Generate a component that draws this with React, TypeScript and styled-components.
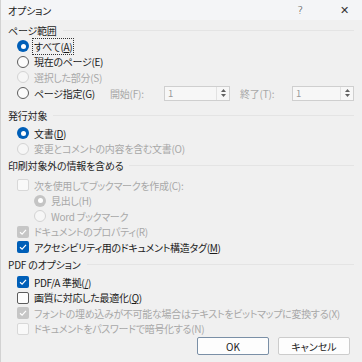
import React from 'react';
import styled, { createGlobalStyle, css } from 'styled-components';

const GlobalStyle = createGlobalStyle`
  html, body {
    margin: 0;
    padding: 0;
    background: #f0f0f0;
  }
  body {
    font-family: 'Noto Sans CJK JP', 'Noto Sans', sans-serif;
    font-feature-settings: 'palt';
    -webkit-font-smoothing: antialiased;
  }
`;

const Dialog = styled.div`
  width: 362px;
  height: 362px;
  box-sizing: border-box;
  border-left: 1px solid #d2d2d2;
  background: #f0f0f0;
  display: flex;
  flex-direction: column;
  overflow: hidden;
`;

const TitleBar = styled.div`
  height: 20px;
  display: flex;
  align-items: center;
  padding: 0 0 0 7px;
  background: #f4f5f7;
  color: #1a1a1a;
  font-size: 10px;
  letter-spacing: -0.2px;
`;

const Title = styled.div`
  flex: 1;
`;

const TitleButton = styled.div<{ $w: number }>`
  width: ${p => p.$w}px;
  text-align: center;
  font-size: 11px;
  color: #333;
  font-family: 'DejaVu Sans', sans-serif;
  font-weight: 300;
`;

const Body = styled.div`
  padding: 0 8px 0 7px;
  display: flex;
  flex-direction: column;
`;

const SectionHeader = styled.div<{ $mt?: number; $mb?: number }>`
  height: 17px;
  margin-top: ${p => p.$mt ?? 0}px;
  margin-bottom: ${p => p.$mb ?? 0}px;
  display: flex;
  align-items: center;
  font-size: 10px;
  letter-spacing: -0.2px;
  color: #1f1f1f;

  &::after {
    content: '';
    flex: 1;
    margin-left: 6px;
    border-top: 1px solid #e4e4e4;
  }
`;

const Row = styled.div<{ $indent?: number }>`
  height: 15.5px;
  display: flex;
  align-items: center;
  padding-left: ${p => 9 + (p.$indent ?? 0)}px;
`;

const RangeRow = styled.div`
  height: 16px;
  display: grid;
  grid-template-columns: 93px 54px 66px 62px 62px;
  align-items: center;
  padding-left: 9px;
`;

const Cell = styled.div`
  display: flex;
  align-items: center;
`;

const Label = styled.span<{ $disabled?: boolean; $focus?: boolean }>`
  font-size: 10px;
  letter-spacing: -0.3px;
  white-space: nowrap;
  color: ${p => (p.$disabled ? '#a8a8a8' : '#1b1b1b')};
  margin-left: 5px;
  ${p =>
    p.$focus &&
    css`
      outline: 1px dotted #333;
      outline-offset: 0;
      padding: 0 1px;
      margin-left: 4px;
    `}
`;

const Key = styled.span`
  text-decoration: underline;
  text-underline-offset: 1px;
`;

const RadioMark = styled.span<{ $checked?: boolean; $disabled?: boolean }>`
  width: 12px;
  height: 12px;
  box-sizing: border-box;
  border-radius: 50%;
  flex: none;
  display: flex;
  align-items: center;
  justify-content: center;
  border: 1px solid ${p => (p.$disabled ? '#d3d3d3' : '#5c5c5c')};
  background: ${p => (p.$disabled ? '#f6f6f6' : '#fbfbfb')};
  ${p =>
    p.$checked &&
    css`
      border: none;
      background: ${p.$disabled ? '#c4c4c4' : '#005fb8'};
      &::after {
        content: '';
        width: 5px;
        height: 5px;
        border-radius: 50%;
        background: #fff;
      }
    `}
`;

const BoxMark = styled.span<{ $checked?: boolean; $disabled?: boolean }>`
  width: 12px;
  height: 12px;
  box-sizing: border-box;
  border-radius: 2px;
  flex: none;
  display: flex;
  align-items: center;
  justify-content: center;
  border: 1px solid ${p => (p.$disabled ? '#d8d8d8' : '#5c5c5c')};
  background: ${p => (p.$disabled ? '#f9f9f9' : '#fdfdfd')};
  ${p =>
    p.$checked &&
    css`
      border: none;
      background: ${p.$disabled ? '#c6c6c6' : '#005fb8'};
    `}
`;

const Check = () => (
  <svg width="8" height="8" viewBox="0 0 8 8">
    <path d="M1 4.2 L3.1 6.2 L7 1.8" fill="none" stroke="#fff" strokeWidth="1.2" />
  </svg>
);

const FieldLabel = styled.span<{ $pad?: number }>`
  font-size: 10px;
  letter-spacing: -0.2px;
  color: #a8a8a8;
  padding-left: ${p => p.$pad ?? 0}px;
  white-space: nowrap;
`;

const SpinBox = styled.div`
  height: 15px;
  box-sizing: border-box;
  border: 1px solid #cfcfcf;
  background: #f7f7f7;
  display: flex;
  align-items: stretch;
`;

const SpinValue = styled.span`
  flex: 1;
  font-size: 9.5px;
  line-height: 13px;
  padding-left: 3px;
  color: #9a9a9a;
`;

const SpinArrows = styled.div`
  width: 12px;
  display: flex;
  flex-direction: column;
  align-items: center;
  justify-content: center;
  gap: 2px;
  border-left: 1px solid #e2e2e2;
`;

const Arrow = ({ up }: { up?: boolean }) => (
  <svg width="5" height="3" viewBox="0 0 5 3">
    <path d={up ? 'M0 3 L2.5 0 L5 3 Z' : 'M0 0 L5 0 L2.5 3 Z'} fill="#606060" />
  </svg>
);

const Footer = styled.div`
  margin-top: auto;
  display: flex;
  justify-content: flex-end;
  gap: 9px;
  padding: 0 12px 7px 0;
`;

const Button = styled.div<{ $primary?: boolean }>`
  width: 72px;
  height: 18px;
  box-sizing: border-box;
  border: 1px solid ${p => (p.$primary ? '#7a8fa6' : '#cccccc')};
  border-radius: 2px;
  background: #fdfdfd;
  font-size: 10px;
  color: #1b1b1b;
  display: flex;
  align-items: center;
  justify-content: center;
`;

type OptProps = {
  kind: 'radio' | 'check';
  checked?: boolean;
  disabled?: boolean;
  indent?: number;
  focus?: boolean;
  children: React.ReactNode;
};

const Option = ({ kind, checked, disabled, indent, focus, children }: OptProps) => (
  <Row $indent={indent}>
    {kind === 'radio' ? (
      <RadioMark $checked={checked} $disabled={disabled} />
    ) : (
      <BoxMark $checked={checked} $disabled={disabled}>
        {checked && <Check />}
      </BoxMark>
    )}
    <Label $disabled={disabled} $focus={focus}>
      {children}
    </Label>
  </Row>
);

const Spin = () => (
  <SpinBox>
    <SpinValue>1</SpinValue>
    <SpinArrows>
      <Arrow up />
      <Arrow />
    </SpinArrows>
  </SpinBox>
);

export default function App() {
  return (
    <>
      <GlobalStyle />
      <Dialog>
        <TitleBar>
          <Title>オプション</Title>
          <TitleButton $w={52}>?</TitleButton>
          <TitleButton $w={36}>✕</TitleButton>
        </TitleBar>
        <Body>
          <SectionHeader $mt={1.5}>ページ範囲</SectionHeader>
          <Option kind="radio" checked focus>
            すべて(<Key>A</Key>)
          </Option>
          <Option kind="radio">現在のページ(E)</Option>
          <Option kind="radio" disabled>
            選択した部分(S)
          </Option>
          <RangeRow>
            <Cell>
              <RadioMark />
              <Label>ページ指定(G)</Label>
            </Cell>
            <FieldLabel>開始(F):</FieldLabel>
            <Spin />
            <FieldLabel $pad={10}>終了(T):</FieldLabel>
            <Spin />
          </RangeRow>
          <SectionHeader $mt={5.5} $mb={2}>
            発行対象
          </SectionHeader>
          <Option kind="radio" checked>
            文書(<Key>D</Key>)
          </Option>
          <Option kind="radio" disabled>
            変更とコメントの内容を含む文書(O)
          </Option>
          <SectionHeader $mb={4}>印刷対象外の情報を含める</SectionHeader>
          <Option kind="check" disabled>
            次を使用してブックマークを作成(C):
          </Option>
          <Option kind="radio" checked disabled indent={17}>
            見出し(H)
          </Option>
          <Option kind="radio" disabled indent={17}>
            Word ブックマーク
          </Option>
          <Option kind="check" checked disabled>
            ドキュメントのプロパティ(R)
          </Option>
          <Option kind="check" checked>
            アクセシビリティ用のドキュメント構造タグ(<Key>M</Key>)
          </Option>
          <SectionHeader $mt={0.5} $mb={2}>
            PDF のオプション
          </SectionHeader>
          <Option kind="check" checked>
            PDF/A 準拠(<Key>/</Key>)
          </Option>
          <Option kind="check">
            画質に対応した最適化(<Key>Q</Key>)
          </Option>
          <Option kind="check" checked disabled>
            フォントの埋め込みが不可能な場合はテキストをビットマップに変換する(X)
          </Option>
          <Option kind="check" disabled>
            ドキュメントをパスワードで暗号化する(N)
          </Option>
        </Body>
        <Footer>
          <Button $primary>OK</Button>
          <Button>キャンセル</Button>
        </Footer>
      </Dialog>
    </>
  );
}
